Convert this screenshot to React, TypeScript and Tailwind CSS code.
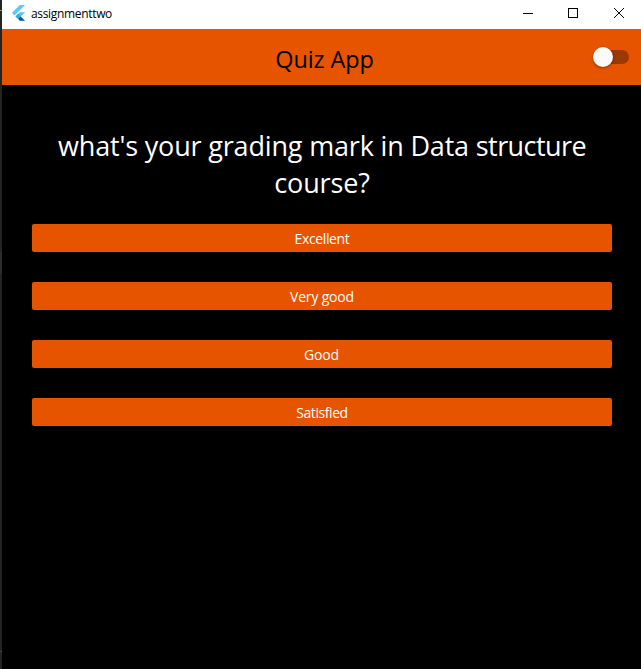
import { useState } from "react";

const answers = [
  { label: "Excellent", style: "tracking-[-0.38px]" },
  { label: "Very good", style: "tracking-[-0.18px]" },
  { label: "Good", style: "tracking-[-0.2px] pr-px" },
  { label: "Satisfied", style: "tracking-[-0.42px]" },
];

function FlutterLogo() {
  return (
    <svg width="13" height="16" viewBox="0 0 13 16" aria-hidden="true">
      <path d="M7.8 0H13L2.6 10.4L0 7.8Z" fill="#5cc8f8" />
      <path d="M7.8 7.2H13L8.8 11.4L6.2 14L3.5 11.4Z" fill="#54c5f8" />
      <path d="M3.5 11.4L6.1 8.8L8.7 11.4L6.1 14Z" fill="#29a8e8" />
      <path d="M6.1 14L8.7 11.4L13 15.8H7.9Z" fill="#01579b" />
    </svg>
  );
}

function TitleBar() {
  return (
    <header className="flex h-[29px] shrink-0 items-center bg-white pl-[10px] text-black">
      <div className="pb-[3px]"><FlutterLogo /></div>
      <span className="ml-[6px] pb-px text-[12px] leading-4 tracking-[-0.33px] whitespace-nowrap">assignmenttwo</span>
      <div className="ml-auto flex h-full items-start pt-2">
        <svg width="118" height="10" viewBox="0 0 118 10" fill="none" stroke="black" className="mr-[14px]">
          <path d="M14 5.5H24M59.5 0.5H68.5V9.5H59.5Z" shapeRendering="crispEdges" />
          <path d="M105 0L115 10M115 0L105 10" />
        </svg>
      </div>
    </header>
  );
}

/* Sliver of the dark window behind the app */
function BackdropEdge() {
  return (
    <div className="flex w-[2px] shrink-0 flex-col bg-[#242424]">
      <div className="mt-[10px] h-px bg-[#b98a3a]" />
      <div className="mt-[241px] h-[22px] bg-[#2c2d33]" />
      <div className="mt-[377px] h-px bg-[#444444]" />
    </div>
  );
}

export default function App() {
  const [on, setOn] = useState(false);
  return (
    <div className="flex h-[669px] w-[641px] overflow-hidden font-['Open_Sans','Noto_Sans',sans-serif]">
      <BackdropEdge />
      <div className="flex w-[639px] flex-col bg-black">
        <TitleBar />
        <div className="grid h-14 shrink-0 grid-cols-[1fr_auto_1fr] items-center bg-[#e65400] pr-3 pl-[18px]">
          <span />
          <h1 className="pt-1 text-[23.5px] leading-8 tracking-[-0.1px] whitespace-nowrap text-black">Quiz App</h1>
          <button
            aria-label="Toggle theme"
            onClick={() => setOn(!on)}
            className="flex h-5 w-9 items-center justify-self-end"
          >
            <span className="flex h-[14px] w-full items-center rounded-full bg-[#9c3900]">
              <span className="h-5 w-5 rounded-full bg-[#fafafa] shadow-[0_1px_3px_rgba(0,0,0,0.4)]" />
            </span>
          </button>
        </div>
        <main className="flex flex-col pt-[42px] pr-[29px] pl-[30px]">
          <h2 className="text-center text-[27px] leading-[37px] tracking-[-0.17px] whitespace-nowrap text-white">
            what's your grading mark in Data <span className="tracking-[-0.58px]">structure</span>
            <br />
            course?
          </h2>
          <div className="mt-[23px] flex flex-col gap-[30px]">
            {answers.map((answer) => (
              <button
                key={answer.label}
                className="flex h-7 w-full items-center justify-center rounded-[2px] bg-[#e65400] pt-[2px] text-[14px] leading-5 font-medium text-white"
              >
                <span className={answer.style}>{answer.label}</span>
              </button>
            ))}
          </div>
        </main>
      </div>
    </div>
  );
}
